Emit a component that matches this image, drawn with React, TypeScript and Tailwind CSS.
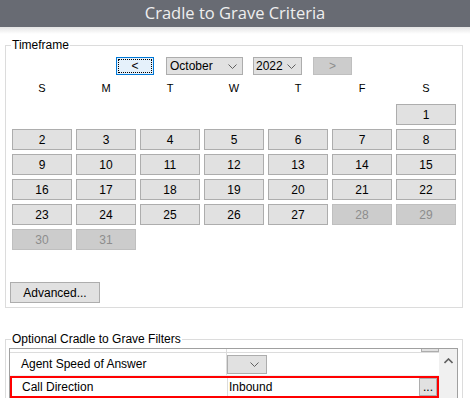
import React from 'react';

const days: { n: number | null; off?: boolean }[] = [
  ...Array.from({ length: 6 }, () => ({ n: null })),
  ...Array.from({ length: 27 }, (_, i) => ({ n: i + 1 })),
  { n: 28, off: true },
  { n: 29, off: true },
  { n: 30, off: true },
  { n: 31, off: true },
];

const Chevron: React.FC<{ className?: string }> = ({ className }) => (
  <svg className={className} width="9" height="5" viewBox="0 0 9 5" fill="none">
    <path d="M0.5 0.5 L4.5 4.5 L8.5 0.5" stroke="#606060" strokeWidth="1" />
  </svg>
);

const App: React.FC = () => {
  return (
    <div className="w-[470px] h-[398px] overflow-hidden bg-white text-black font-['Liberation_Sans',Arial,sans-serif] text-[12px]">
      <div className="h-[27px] bg-[#686b73] flex items-center justify-center">
        <span className="text-[#efefef] text-[16.5px] font-['Open_Sans',sans-serif] leading-none">Cradle to Grave Criteria</span>
      </div>
      <div className="h-[7px] bg-gradient-to-b from-[#e4e4e4] to-white" />

      <fieldset className="ml-[5px] mt-[4px] w-[458px] border border-[#dcdcdc] pb-[4px]">
        <legend className="ml-[5px] px-[1px] h-[14px] leading-[14px] text-[12px]">Timeframe</legend>

        <div className="mt-[5px] ml-[110px] flex items-center h-[18px]">
          <div className="w-[38px] h-[18px] border border-[#0078d7] bg-[#e5f1fb] p-[1px]">
            <div className="h-full border border-dotted border-black flex items-center justify-center text-[12px] leading-none">&lt;</div>
          </div>
          <div className="ml-[12px] w-[77px] h-[18px] border border-[#adadad] bg-[#e1e1e1] flex items-center justify-between pl-[3px] pr-[5px]">
            <span className="leading-none">October</span>
            <Chevron />
          </div>
          <div className="ml-[10px] w-[49px] h-[18px] border border-[#adadad] bg-[#e1e1e1] flex items-center justify-between pl-[2px] pr-[5px]">
            <span className="leading-none">2022</span>
            <Chevron />
          </div>
          <div className="ml-[11px] w-[39px] h-[18px] border border-[#bfbfbf] bg-[#cccccc] flex items-center justify-center text-[#8d8d8d] leading-none">&gt;</div>
        </div>

        <div className="mt-[6px] ml-[6px] grid grid-cols-[repeat(7,60px)] gap-x-[4px] h-[14px] leading-[14px] text-[11px]">
          {['S', 'M', 'T', 'W', 'T', 'F', 'S'].map((d, i) => (
            <div key={i} className="text-center">{d}</div>
          ))}
        </div>

        <div className="mt-[9px] ml-[6px] grid grid-cols-[repeat(7,60px)] auto-rows-[21px] gap-[4px]">
          {days.map((d, i) =>
            d.n === null ? (
              <div key={i} />
            ) : (
              <div
                key={i}
                className={
                  d.off
                    ? 'border border-[#bfbfbf] bg-[#cccccc] text-[#8d8d8d] flex items-center justify-center'
                    : 'border border-[#adadad] bg-[#e1e1e1] flex items-center justify-center'
                }
              >
                {d.n}
              </div>
            )
          )}
        </div>

        <div className="mt-[32px] ml-[4px] w-[90px] h-[21px] border border-[#adadad] bg-[#e1e1e1] flex items-center justify-center">
          Advanced...
        </div>
      </fieldset>

      <fieldset className="ml-[5px] mt-[24px] w-[458px] border border-[#dcdcdc] h-[80px]">
        <legend className="ml-[5px] px-[1px] h-[14px] leading-[14px] text-[12px]">Optional Cradle to Grave Filters</legend>

        <div className="mt-[2px] ml-[3px] w-[449px] border border-[#a0a0a0] flex h-[60px]">
          <div className="flex-1 flex flex-col">
            <div className="h-[4px] flex border-b border-[#dcdcdc]">
              <div className="w-[217px] border-r border-[#dcdcdc]" />
              <div className="flex-1 flex justify-end">
                <div className="w-[18px] border-x border-b border-[#adadad] bg-[#e1e1e1]" />
              </div>
            </div>
            <div className="h-[23px] flex border-b border-[#f0f0f0]">
              <div className="w-[217px] border-r border-[#dcdcdc] pl-[11px] flex items-center">Agent Speed of Answer</div>
              <div className="flex-1 flex items-center">
                <div className="w-[40px] h-[19px] border border-[#adadad] bg-[#e1e1e1] flex items-center justify-end pr-[7px]">
                  <Chevron />
                </div>
              </div>
            </div>
            <div className="h-[22px] flex border-2 border-[#ff0000]">
              <div className="w-[216px] border-r border-[#dcdcdc] pl-[10px] flex items-center">Call Direction</div>
              <div className="flex-1 flex items-center pl-[1px]">Inbound</div>
              <div className="w-[18px] border border-[#adadad] bg-[#e1e1e1] flex items-end justify-center pb-[2px] leading-none">...</div>
            </div>
          </div>
          <div className="w-[18px] bg-[#f0f0f0] flex justify-center pt-[9px]">
            <svg width="9" height="6" viewBox="0 0 9 6" fill="none">
              <path d="M0.5 5 L4.5 1 L8.5 5" stroke="#606060" strokeWidth="1.6" />
            </svg>
          </div>
        </div>
      </fieldset>
    </div>
  );
};

export default App;
